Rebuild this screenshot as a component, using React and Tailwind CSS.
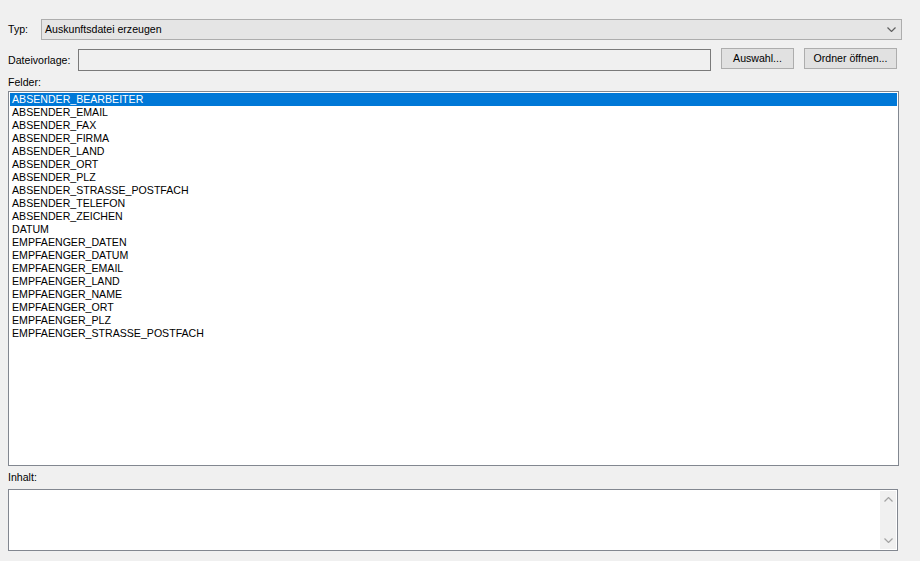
import React from "react";

const fields = [
  "ABSENDER_BEARBEITER",
  "ABSENDER_EMAIL",
  "ABSENDER_FAX",
  "ABSENDER_FIRMA",
  "ABSENDER_LAND",
  "ABSENDER_ORT",
  "ABSENDER_PLZ",
  "ABSENDER_STRASSE_POSTFACH",
  "ABSENDER_TELEFON",
  "ABSENDER_ZEICHEN",
  "DATUM",
  "EMPFAENGER_DATEN",
  "EMPFAENGER_DATUM",
  "EMPFAENGER_EMAIL",
  "EMPFAENGER_LAND",
  "EMPFAENGER_NAME",
  "EMPFAENGER_ORT",
  "EMPFAENGER_PLZ",
  "EMPFAENGER_STRASSE_POSTFACH",
];

function Chevron({ up }) {
  return (
    <svg width="9" height="5" viewBox="0 0 9 5" className="block">
      <path
        d={up ? "M0.5 4.5 L4.5 0.5 L8.5 4.5" : "M0.5 0.5 L4.5 4.5 L8.5 0.5"}
        fill="none"
        stroke="currentColor"
        strokeWidth="1.2"
      />
    </svg>
  );
}

export default function App() {
  return (
    <div className="h-[561px] w-[920px] overflow-hidden bg-[#f0f0f0] pl-[8px] pt-[19px] text-[10.6px] leading-[13px] text-black [font-family:'Liberation_Sans',Arial,sans-serif]">
      {/* Typ */}
      <div className="flex items-center">
        <span className="w-[33px]">Typ:</span>
        <div className="flex h-[21px] w-[861px] items-center justify-between border border-[#adadad] bg-[#e5e5e5] pl-[3px] pr-[5px]">
          <span>Auskunftsdatei erzeugen</span>
          <span className="text-[#606060]">
            <Chevron />
          </span>
        </div>
      </div>

      {/* Dateivorlage */}
      <div className="mt-[8px] flex items-start">
        <span className="mt-[6px] w-[70px]">Dateivorlage:</span>
        <div className="mt-[1px] h-[22px] w-[633px] border border-[#7a7a7a] bg-[#f0f0f0]" />
        <button className="ml-[10px] h-[21px] w-[73px] border border-[#adadad] bg-[#e1e1e1] text-center">
          Auswahl...
        </button>
        <button className="ml-[10px] h-[21px] w-[93px] border border-[#adadad] bg-[#e1e1e1] text-center">
          Ordner öffnen...
        </button>
      </div>

      {/* Felder */}
      <div className="mt-[5px]">Felder:</div>
      <div className="mt-[2px] h-[375px] w-[891px] border border-[#828790] bg-white p-[1px]">
        {fields.map((f, i) => (
          <div
            key={f}
            className={
              i === 0
                ? "h-[13px] bg-[#0078d7] pl-[2px] text-white"
                : "h-[13px] pl-[2px]"
            }
          >
            {f}
          </div>
        ))}
      </div>

      {/* Inhalt */}
      <div className="mt-[5px]">Inhalt:</div>
      <div className="mt-[5px] flex h-[62px] w-[890px] justify-end border border-[#828790] bg-white p-[1px]">
        <div className="flex w-[16px] flex-col items-center justify-between bg-[#f0f0f0] py-[6px] text-[#a3a3a3]">
          <Chevron up />
          <Chevron />
        </div>
      </div>
    </div>
  );
}
